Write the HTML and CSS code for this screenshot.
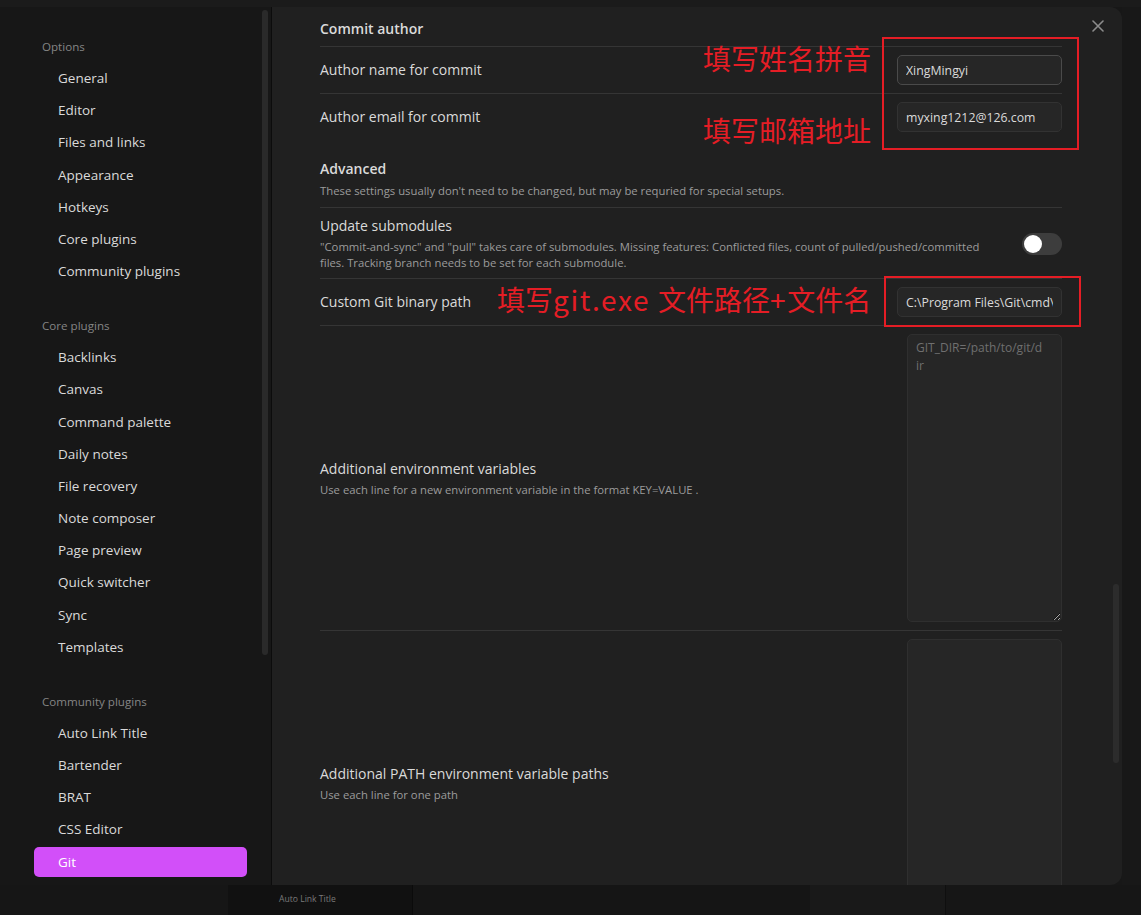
FILE: index.html
```html
<!DOCTYPE html>
<html lang="en">
<head>
<meta charset="utf-8">
<title>Settings - Git</title>
<link rel="stylesheet" href="styles.css">
</head>
<body>
<div class="app">
  <div class="topbar"></div>
  <div class="modal-row">
    <div class="modal">
      <nav class="sidebar">
        <div class="nav-group">
          <div class="nav-header">Options</div>
          <div class="nav-item">General</div>
          <div class="nav-item">Editor</div>
          <div class="nav-item">Files and links</div>
          <div class="nav-item">Appearance</div>
          <div class="nav-item">Hotkeys</div>
          <div class="nav-item">Core plugins</div>
          <div class="nav-item">Community plugins</div>
        </div>
        <div class="nav-group">
          <div class="nav-header">Core plugins</div>
          <div class="nav-item">Backlinks</div>
          <div class="nav-item">Canvas</div>
          <div class="nav-item">Command palette</div>
          <div class="nav-item">Daily notes</div>
          <div class="nav-item">File recovery</div>
          <div class="nav-item">Note composer</div>
          <div class="nav-item">Page preview</div>
          <div class="nav-item">Quick switcher</div>
          <div class="nav-item">Sync</div>
          <div class="nav-item">Templates</div>
        </div>
        <div class="nav-group">
          <div class="nav-header">Community plugins</div>
          <div class="nav-item">Auto Link Title</div>
          <div class="nav-item">Bartender</div>
          <div class="nav-item">BRAT</div>
          <div class="nav-item">CSS Editor</div>
          <div class="nav-item is-active">Git</div>
        </div>
        <div class="sidebar-scrollbar"></div>
      </nav>
      <main class="content">
        <div class="close-btn" aria-label="Close">
          <svg width="12" height="12" viewBox="0 0 12 12"><path d="M1 1L11 11M11 1L1 11" stroke="#8c8c8c" stroke-width="1.6" stroke-linecap="round"/></svg>
        </div>
        <div class="content-scrollbar"></div>
        <div class="content-inner">
          <div class="setting-heading first">
            <div class="setting-name strong">Commit author</div>
          </div>
          <div class="setting">
            <div class="setting-info"><div class="setting-name">Author name for commit</div></div>
            <div class="setting-control"><input class="text-input hover" type="text" value="XingMingyi"></div>
          </div>
          <div class="setting">
            <div class="setting-info"><div class="setting-name">Author email for commit</div></div>
            <div class="setting-control"><input class="text-input" type="text" value="myxing1212@126.com"></div>
          </div>
          <div class="setting-heading advanced">
            <div class="setting-name strong">Advanced</div>
            <div class="setting-desc">These settings usually don't need to be changed, but may be requried for special setups.</div>
          </div>
          <div class="setting submodules">
            <div class="setting-info">
              <div class="setting-name">Update submodules</div>
              <div class="setting-desc">"Commit-and-sync" and "pull" takes care of submodules. Missing features: Conflicted files, count of pulled/pushed/committed files. Tracking branch needs to be set for each submodule.</div>
            </div>
            <div class="setting-control"><div class="toggle"><div class="knob"></div></div></div>
          </div>
          <div class="setting">
            <div class="setting-info"><div class="setting-name">Custom Git binary path</div></div>
            <div class="setting-control"><input class="text-input" type="text" value="C:\Program Files\Git\cmd\git.exe"></div>
          </div>
          <div class="setting">
            <div class="setting-info">
              <div class="setting-name">Additional environment variables</div>
              <div class="setting-desc">Use each line for a new environment variable in the format KEY=VALUE .</div>
            </div>
            <div class="setting-control"><textarea class="area" placeholder="GIT_DIR=/path/to/git/d&#10;ir"></textarea></div>
          </div>
          <div class="setting">
            <div class="setting-info">
              <div class="setting-name">Additional PATH environment variable paths</div>
              <div class="setting-desc">Use each line for one path</div>
            </div>
            <div class="setting-control"><textarea class="area"></textarea></div>
          </div>
        </div>
      </main>
    </div>
    <div class="gutter"></div>
  </div>
  <div class="statusbar">
    <div class="sb-left"></div>
    <div class="sb-panel">Auto Link Title</div>
    <div class="sb-mid"></div>
    <div class="sb-box"></div>
    <div class="sb-right"></div>
  </div>

  <div class="note-box box-author"></div>
  <div class="note-box box-path"></div>
  <div class="note-text note-name">填写姓名拼音</div>
  <div class="note-text note-email">填写邮箱地址</div>
  <div class="note-text note-path">填写<span class="latin">git.exe </span>文件路径<span class="latin">+</span>文件名</div>
</div>
</body>
</html>
```

FILE: styles.css
```css
* { box-sizing: border-box; }
html, body {
  margin: 0;
  padding: 0;
  width: 1141px;
  height: 915px;
  overflow: hidden;
  background: #171717;
  font-family: "Open Sans", "Noto Sans", sans-serif;
  color: #dadada;
}
.app {
  position: relative;
  width: 1141px;
  height: 915px;
  display: flex;
  flex-direction: column;
}
.topbar {
  height: 7px;
  background: #1b1b1b;
  flex: none;
}
.modal-row {
  display: flex;
  height: 878px;
  flex: none;
}
.modal {
  display: flex;
  width: 1122px;
  height: 878px;
  border-radius: 0 12px 12px 0;
  overflow: hidden;
}
.gutter {
  flex: 1;
  background: #181818;
}

/* Sidebar */
.sidebar {
  position: relative;
  width: 272px;
  flex: none;
  background: #171717;
  border-right: 1px solid #0c0c0c;
  padding: 30px 24px 0 34px;
}
.nav-group + .nav-group { margin-top: 30px; }
.nav-header {
  height: 20px;
  line-height: 20px;
  padding-left: 8px;
  font-size: 11.6px;
  color: #858585;
  margin-bottom: 6px;
}
.nav-item {
  height: 30px;
  line-height: 30px;
  padding-left: 24px;
  font-size: 13.5px;
  color: #dadada;
  border-radius: 5px;
  margin-bottom: 2.2px;
}
.nav-item.is-active {
  background: #d24ff9;
  color: #ffffff;
}
.sidebar-scrollbar {
  position: absolute;
  right: 3px;
  top: 3px;
  width: 6px;
  height: 645px;
  background: #2a2a2a;
  border-radius: 3px;
}

/* Content */
.content {
  position: relative;
  flex: 1;
  background: #202020;
  overflow: hidden;
}
.close-btn {
  position: absolute;
  top: 13px;
  right: 18px;
  width: 12px;
  height: 12px;
  display: flex;
}
.content-scrollbar {
  position: absolute;
  right: 3px;
  top: 577px;
  width: 6px;
  height: 179px;
  background: #2c2c2c;
  border-radius: 3px;
}
.content-inner {
  padding: 0 60px 0 48px;
}
.setting-heading.first { padding: 12px 0 7px; }
.setting-heading.advanced { padding: 19px 0 8px; }
.setting {
  display: flex;
  align-items: center;
  padding: 8px 0;
  border-top: 1px solid #353535;
}
.setting.submodules { padding: 8px 0 7px; }
.setting-info {
  flex: 1 1 auto;
  margin-right: 24px;
}
.setting-name {
  font-size: 14px;
  line-height: 20px;
  color: #dadada;
}
.setting-name.strong { font-weight: 600; }
.setting-desc {
  font-size: 11.3px;
  line-height: 16px;
  color: #9c9c9c;
  margin-top: 3px;
}
.advanced .setting-desc { margin-top: 4px; }
.setting-control {
  flex: none;
  display: flex;
  justify-content: flex-end;
}
.text-input {
  width: 165px;
  height: 30px;
  background: #262626;
  border: 1px solid #323232;
  border-radius: 5px;
  color: #dadada;
  font-family: "Open Sans", sans-serif;
  font-size: 12.3px;
  padding: 0 8px;
  outline: none;
}
.text-input.hover { border-color: #4a4a4a; }
.area {
  width: 155px;
  height: 288px;
  background: #262626;
  border: 1px solid #2f2f2f;
  border-radius: 5px;
  color: #dadada;
  font-family: "Open Sans", sans-serif;
  font-size: 12px;
  line-height: 18px;
  padding: 4px 8px;
  resize: vertical;
  outline: none;
  overflow: hidden;
}
.area::placeholder { color: #6f6f6f; }
.toggle {
  position: relative;
  width: 40px;
  height: 22px;
  border-radius: 11px;
  background: #3d3d3d;
}
.knob {
  position: absolute;
  left: 2px;
  top: 2px;
  width: 18px;
  height: 18px;
  border-radius: 50%;
  background: #ffffff;
}

/* Status bar / bottom */
.statusbar {
  display: flex;
  height: 30px;
  flex: none;
  background: #161616;
}
.sb-left { width: 228px; background: #161616; }
.sb-panel {
  width: 185px;
  background: #111111;
  border-right: 1px solid #0b0b0b;
  padding-left: 51px;
  font-size: 8.6px;
  line-height: 28px;
  color: #7a7a7a;
}
.sb-mid { width: 397px; background: #151515; }
.sb-box { width: 136px; background: #191919; border-right: 1px solid #0f0f0f; }
.sb-right { flex: 1; background: #161616; }

/* Red annotations (overlay) */
.note-box {
  position: absolute;
  border: 2px solid #e51d25;
}
.box-author { left: 882px; top: 37px; width: 197px; height: 113px; }
.box-path { left: 884px; top: 276px; width: 197px; height: 51px; }
.note-text {
  position: absolute;
  font-family: "Noto Sans CJK SC", "Noto Sans", sans-serif;
  font-size: 28px;
  line-height: 36px;
  color: #e51d25;
  white-space: nowrap;
}
.note-text .latin { letter-spacing: 1.6px; }
.note-name { left: 703px; top: 40px; }
.note-email { left: 703px; top: 112px; }
.note-path { left: 497px; top: 281px; }
```
